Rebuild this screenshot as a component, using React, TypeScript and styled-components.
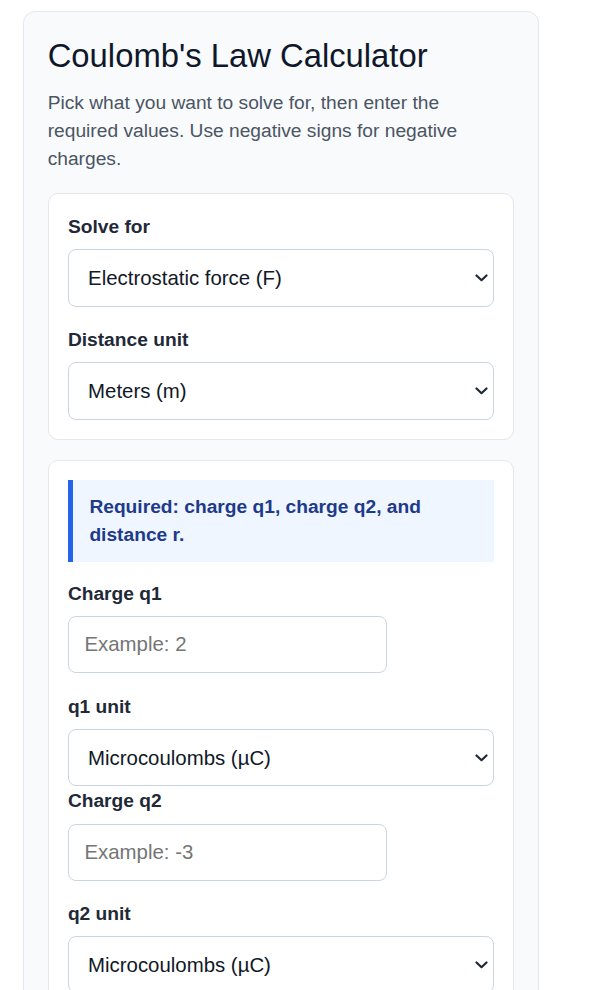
import styled, { createGlobalStyle } from "styled-components";

const GlobalStyle = createGlobalStyle`
  * {
    box-sizing: border-box;
  }
  body {
    margin: 0;
    background: #ffffff;
    font-family: "Liberation Sans", Arial, sans-serif;
    color: #1f2937;
  }
`;

const Page = styled.div`
  padding: 11px 0 0 22.7px;
`;

const Calculator = styled.section`
  width: 516.5px;
  background: #f8fafc;
  border: 1px solid #e2e8f0;
  border-radius: 12px;
  padding: 24px 24px 40px;
`;

const Title = styled.h1`
  margin: 0 0 14px;
  font-size: 32.8px;
  line-height: 1.2;
  font-weight: 400;
  color: #0f172a;
`;

const Intro = styled.p`
  margin: 0 0 19.6px;
  font-size: 19.2px;
  line-height: 28px;
  color: #4b5563;
`;

const Panel = styled.div`
  background: #ffffff;
  border: 1px solid #e5e7eb;
  border-radius: 10px;
  padding: 19.2px;
  margin-bottom: 20px;
`;

const Field = styled.div<{ $tight?: boolean }>`
  display: flex;
  flex-direction: column;
  align-items: flex-start;
  margin-bottom: ${(p) => (p.$tight ? "1px" : "19.2px")};
  &:last-child {
    margin-bottom: 0;
  }
`;

const Label = styled.label`
  font-size: 19.2px;
  line-height: 28px;
  font-weight: 700;
  color: #1f2937;
  margin-bottom: 8.3px;
`;

const SelectWrap = styled.div`
  position: relative;
  width: 100%;
  svg {
    position: absolute;
    right: 6px;
    top: 50%;
    transform: translateY(-50%);
    pointer-events: none;
  }
`;

const Select = styled.select`
  appearance: none;
  width: 100%;
  height: 57.4px;
  padding: 0 30px 0 19.2px;
  font-family: "Liberation Sans", Arial, sans-serif;
  font-size: 20.4px;
  color: #111827;
  background: #ffffff;
  border: 1px solid #cbd5e1;
  border-radius: 8px;
`;

const NumberInput = styled.input`
  width: 319.5px;
  height: 57px;
  padding: 0 15.6px;
  font-family: "Liberation Sans", Arial, sans-serif;
  font-size: 20.4px;
  color: #111827;
  background: #ffffff;
  border: 1px solid #cbd5e1;
  border-radius: 8px;
  &::placeholder {
    color: #757575;
  }
`;

const Notice = styled.div`
  background: #eff6ff;
  border-left: 5px solid #2563eb;
  padding: 13.2px 16.5px;
  margin-bottom: 17.6px;
  font-size: 19.2px;
  line-height: 28px;
  font-weight: 700;
  color: #1e3a8a;
`;

const Chevron = () => (
  <svg width="13" height="8" viewBox="0 0 13 8" aria-hidden="true">
    <path
      d="M1.5 1.5 L6.5 6.2 L11.5 1.5"
      fill="none"
      stroke="#1f2937"
      strokeWidth="2.2"
      strokeLinecap="round"
      strokeLinejoin="round"
    />
  </svg>
);

type DropdownProps = {
  id: string;
  value: string;
  options: [string, string][];
};

function Dropdown({ id, value, options }: DropdownProps) {
  return (
    <SelectWrap>
      <Select id={id} defaultValue={value}>
        {options.map(([v, text]) => (
          <option key={v} value={v}>
            {text}
          </option>
        ))}
      </Select>
      <Chevron />
    </SelectWrap>
  );
}

const chargeUnits: [string, string][] = [
  ["C", "Coulombs (C)"],
  ["mC", "Millicoulombs (mC)"],
  ["uC", "Microcoulombs (µC)"],
  ["nC", "Nanocoulombs (nC)"],
];

export default function App() {
  return (
    <>
      <GlobalStyle />
      <Page>
        <Calculator>
          <Title>Coulomb's Law Calculator</Title>
          <Intro>
            Pick what you want to solve for, then enter the required values.
            Use negative signs for negative charges.
          </Intro>

          <Panel>
            <Field>
              <Label htmlFor="solve">Solve for</Label>
              <Dropdown
                id="solve"
                value="F"
                options={[
                  ["F", "Electrostatic force (F)"],
                  ["q1", "Charge q1"],
                  ["q2", "Charge q2"],
                  ["r", "Distance (r)"],
                ]}
              />
            </Field>
            <Field>
              <Label htmlFor="dist-unit">Distance unit</Label>
              <Dropdown
                id="dist-unit"
                value="m"
                options={[
                  ["m", "Meters (m)"],
                  ["cm", "Centimeters (cm)"],
                  ["mm", "Millimeters (mm)"],
                ]}
              />
            </Field>
          </Panel>

          <Panel>
            <Notice>Required: charge q1, charge q2, and distance r.</Notice>
            <Field>
              <Label htmlFor="q1">Charge q1</Label>
              <NumberInput id="q1" type="text" placeholder="Example: 2" />
            </Field>
            {/* the unit dropdown sits right on top of the next label */}
            <Field $tight>
              <Label htmlFor="q1-unit">q1 unit</Label>
              <Dropdown id="q1-unit" value="uC" options={chargeUnits} />
            </Field>
            <Field>
              <Label htmlFor="q2">Charge q2</Label>
              <NumberInput id="q2" type="text" placeholder="Example: -3" />
            </Field>
            <Field>
              <Label htmlFor="q2-unit">q2 unit</Label>
              <Dropdown id="q2-unit" value="uC" options={chargeUnits} />
            </Field>
          </Panel>
        </Calculator>
      </Page>
    </>
  );
}
